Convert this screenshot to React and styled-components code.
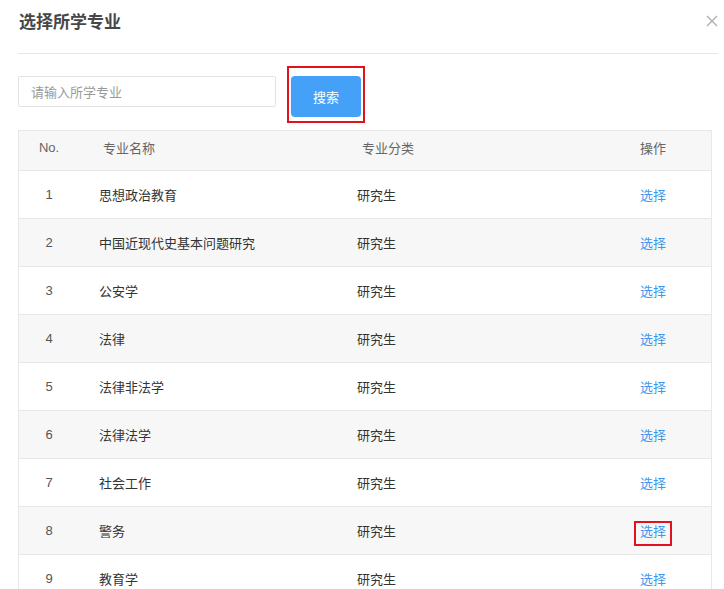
import React from 'react';
import styled, { createGlobalStyle } from 'styled-components';

const GlobalStyle = createGlobalStyle`
  html, body {
    margin: 0;
    padding: 0;
    background: #fff;
  }
  body {
    font-family: "Liberation Sans", "Noto Sans CJK SC", sans-serif;
    color: #333;
  }
  * { box-sizing: border-box; }
`;

const Dialog = styled.div`
  width: 724px;
  height: 589px;
  overflow: hidden;
  padding: 0 6px 0 18px;
  background: #fff;
`;

const Header = styled.div`
  display: flex;
  justify-content: space-between;
  align-items: flex-start;
  height: 54px;
  padding-top: 11px;
  padding-left: 1px;
  border-bottom: 1px solid #e6e6e6;
`;

const Title = styled.h3`
  margin: 0;
  font-family: "Noto Sans CJK SC", sans-serif;
  font-size: 17px;
  line-height: 20px;
  font-weight: 700;
  color: #474747;
`;

const Close = styled.button`
  width: 12px;
  height: 12px;
  margin-top: 4px;
  padding: 0;
  border: 0;
  background: none;
  cursor: pointer;
  svg { display: block; }
`;

const SearchRow = styled.div`
  display: flex;
  align-items: flex-start;
  gap: 15px;
  margin-top: 22px;
`;

const Input = styled.input`
  width: 258px;
  height: 31px;
  padding: 0 12px;
  border: 1px solid #e2e2e2;
  border-radius: 2px;
  font-family: "Noto Sans CJK SC", sans-serif;
  font-size: 13px;
  color: #333;
  outline: none;
  &::placeholder { color: #9a9a9a; }
`;

const Mark = styled.span`
  position: relative;
  display: inline-block;
  &::after {
    content: '';
    position: absolute;
    left: ${p => -p.$x}px;
    right: ${p => -p.$x}px;
    top: ${p => -p.$top}px;
    bottom: ${p => -p.$bottom}px;
    border: 2.5px solid #e3101e;
    pointer-events: none;
  }
`;

const Button = styled.button`
  display: block;
  width: 70px;
  height: 41px;
  border: 0;
  border-radius: 4px;
  background: #45a0f7;
  color: #fff;
  font-family: "Noto Sans CJK SC", sans-serif;
  font-size: 13px;
  cursor: pointer;
`;

const Table = styled.div`
  margin-top: 13px;
  width: 694px;
  border: 1px solid #e8e8e8;
  border-bottom: 0;
`;

const Row = styled.div`
  display: grid;
  grid-template-columns: 59px 259px 263px 1fr;
  align-items: center;
  height: ${p => (p.$head ? 40 : 48)}px;
  border-bottom: 1px solid #e8e8e8;
  background: ${p => (p.$gray ? '#f7f7f7' : '#fff')};
`;

const Cell = styled.div`
  font-family: "Noto Sans CJK SC", sans-serif;
  font-size: 13px;
  color: ${p => (p.$head ? '#666' : '#333')};
  text-align: ${p => p.$align || 'left'};
  padding-left: ${p => p.$pad || 0}px;
  margin-top: ${p => (p.$head ? -7 : 0)}px;
`;

const Num = styled(Cell)`
  font-family: "Liberation Sans", sans-serif;
  color: ${p => (p.$head ? '#666' : '#555')};
  padding-left: 1px;
`;

const Action = styled(Cell)`
  text-align: center;
  padding-right: 5px;
`;

const Link = styled.a`
  color: #3f98ec;
  text-decoration: none;
  cursor: pointer;
`;

const rows = [
  '思想政治教育',
  '中国近现代史基本问题研究',
  '公安学',
  '法律',
  '法律非法学',
  '法律法学',
  '社会工作',
  '警务',
  '教育学',
];

export default function App() {
  return (
    <Dialog>
      <GlobalStyle />
      <Header>
        <Title>选择所学专业</Title>
        <Close aria-label="close">
          <svg width="12" height="12" viewBox="0 0 12 12">
            <path d="M1 1L11 11M11 1L1 11" stroke="#a8a8a8" strokeWidth="1.1" />
          </svg>
        </Close>
      </Header>
      <SearchRow>
        <Input placeholder="请输入所学专业" />
        <Mark $x={4} $top={10} $bottom={6}>
          <Button>搜索</Button>
        </Mark>
      </SearchRow>
      <Table>
        <Row $head $gray>
          <Num $head $align="center">No.</Num>
          <Cell $head $pad={25}>专业名称</Cell>
          <Cell $head $pad={25}>专业分类</Cell>
          <Action $head>操作</Action>
        </Row>
        {rows.map((name, i) => (
          <Row key={name} $gray={i % 2 === 1}>
            <Num $align="center">{i + 1}</Num>
            <Cell $pad={21}>{name}</Cell>
            <Cell $pad={20}>研究生</Cell>
            <Action>
              {i === 7 ? (
                <Mark $x={6} $top={0} $bottom={6}>
                  <Link>选择</Link>
                </Mark>
              ) : (
                <Link>选择</Link>
              )}
            </Action>
          </Row>
        ))}
      </Table>
    </Dialog>
  );
}
